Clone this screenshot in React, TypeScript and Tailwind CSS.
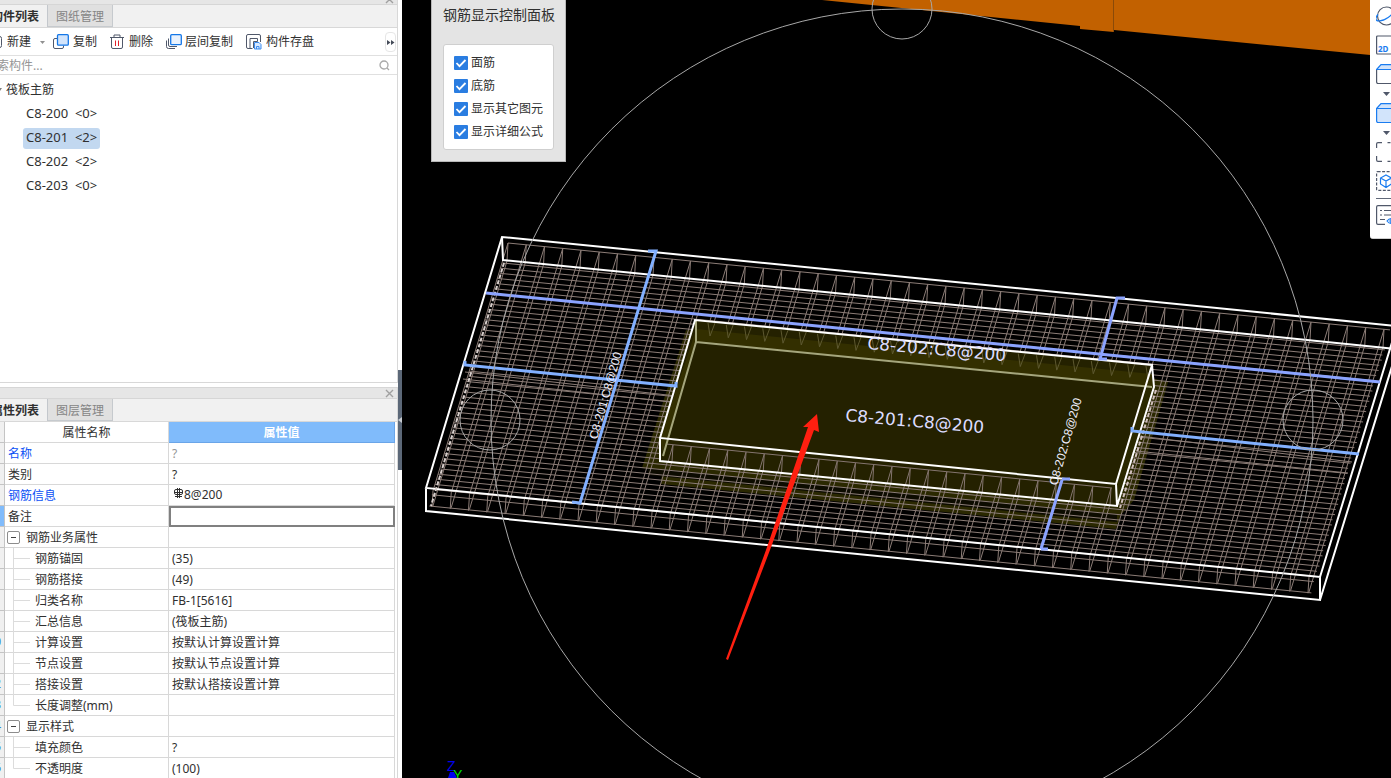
import React from 'react'

type PropertyRow = {
  name: string
  value?: string
  kind?: 'link' | 'group' | 'child' | 'last'
  muted?: boolean
  rebar?: boolean
  active?: boolean
}

const components = [
  { name: 'C8-200', count: 0 },
  { name: 'C8-201', count: 2, selected: true },
  { name: 'C8-202', count: 2 },
  { name: 'C8-203', count: 0 },
]

const properties: PropertyRow[] = [
  { name: '名称', value: '?', kind: 'link', muted: true },
  { name: '类别', value: '?' },
  { name: '钢筋信息', value: '8@200', kind: 'link', rebar: true },
  { name: '备注', active: true },
  { name: '钢筋业务属性', kind: 'group' },
  { name: '钢筋锚固', value: '(35)', kind: 'child' },
  { name: '钢筋搭接', value: '(49)', kind: 'child' },
  { name: '归类名称', value: 'FB-1[5616]', kind: 'child' },
  { name: '汇总信息', value: '(筏板主筋)', kind: 'child' },
  { name: '计算设置', value: '按默认计算设置计算', kind: 'child' },
  { name: '节点设置', value: '按默认节点设置计算', kind: 'child' },
  { name: '搭接设置', value: '按默认搭接设置计算', kind: 'child' },
  { name: '长度调整(mm)', kind: 'last' },
  { name: '显示样式', kind: 'group' },
  { name: '填充颜色', value: '?', kind: 'child' },
  { name: '不透明度', value: '(100)', kind: 'last' },
]

const displayOptions = ['面筋', '底筋', '显示其它图元', '显示详细公式']

// Rebar mesh of the slab, in the same coordinates as the viewport's viewBox
const SLOPE = 0.0985
const LEAN = -0.3025

const range = (n: number) => Array.from({ length: n }, (_, i) => i)

const crossBars = range(49)
  .map((k) => {
    const x = 508 + k * 18.25
    const y = 243 + k * 18.25 * SLOPE
    return (
      `M${x} ${y}l${248 * LEAN} 248` +
      `M${x - 1} ${y + 18}l${245 * LEAN} 245` +
      `M${x} ${y}l-1 18` +
      `M${x + 248 * LEAN} ${y + 248}l-1 16`
    )
  })
  .join('')

const longBars = [0, ...range(46).map((i) => 20 + i * 5.15), 263]
  .map((dy, i) => {
    const x = 508 + (dy - (i % 2) * 3) * LEAN
    return `M${x} ${243 + dy}l882 ${882 * SLOPE}`
  })
  .join('')

const pitTeeth = (x0: number, y0: number, n: number) =>
  range(n)
    .map((k) => {
      const x = x0 + k * 18.25
      const y = y0 + k * 18.25 * SLOPE
      return `M${x} ${y}l-1 17M${x} ${y}l-5 17`
    })
    .join('')

const backTeeth = range(25)
  .map((k) => {
    const x = 710 + k * 18.25
    const y = 336 + k * 18.25 * SLOPE
    return `M${x} ${y}l5 -13M${x} ${y}l-2 -13`
  })
  .join('')

function CloseMark() {
  return (
    <svg width="9" height="9" viewBox="0 0 9 9" stroke="#a0a0a0" strokeWidth="1.4">
      <path d="M1 1l7 7M8 1l-7 7" />
    </svg>
  )
}

function PaneTitle() {
  return (
    <div className="h-3 shrink-0 flex items-center justify-end pr-[3px] bg-[#e6e6e6] border-y border-[#d6d6d6]">
      <button type="button" aria-label="关闭">
        <CloseMark />
      </button>
    </div>
  )
}

function Tabs({ active, other }: { active: string; other: string }) {
  return (
    <div className="h-[23px] shrink-0 flex bg-[#f1f1f1] border-b border-[#d8d8d8]" role="tablist">
      <button type="button" role="tab" aria-selected="true" className="w-12 flex justify-end items-center overflow-hidden whitespace-nowrap pt-0.5 pr-2 font-bold text-[#303030] border-r border-[#c3c7cc]">
        {active}
      </button>
      <button type="button" role="tab" aria-selected="false" className="pt-0.5 px-2 text-[#858585] bg-[#e0e0e0] border-r border-b border-[#c6cace]">
        {other}
      </button>
    </div>
  )
}

function CopyIcon() {
  return (
    <svg width="16" height="16" viewBox="0 0 16 16" fill="none">
      <path d="M4 4.5H2a1.500 1.500 0 0 0-1.500 1.500v7A1.500 1.500 0 0 0 2 14.500h7a1.500 1.500 0 0 0 1.500-1.500v-1.500" stroke="#50586a" />
      <rect x="4.500" y="0.700" width="10.800" height="10.500" rx="1" fill="#d2e4fb" stroke="#1477e8" strokeWidth="1.300" />
    </svg>
  )
}

function TrashIcon() {
  return (
    <svg width="14" height="16" viewBox="0 0 14 16" fill="none" stroke="#50586a">
      <path d="M0 3.500h14M4 3.500v-2.500h6v2.500M1.500 3.500V13a1.500 1.500 0 0 0 1.500 1.500h8A1.500 1.500 0 0 0 12.500 13V3.500" />
      <path d="M5.500 6.500v5.500M8.500 6.500v5.500" stroke="#e0202c" />
    </svg>
  )
}

function FloorCopyIcon() {
  return (
    <svg width="16" height="16" viewBox="0 0 16 16" fill="none">
      <path d="M.5 6.500v6a2 2 0 0 0 2 2H9M2.500 4.500v6.500a1.500 1.500 0 0 0 1.500 1.500h7" stroke="#50586a" />
      <rect x="4.700" y="0.700" width="10.600" height="10" rx="1" fill="#e9f2fd" stroke="#1477e8" strokeWidth="1.300" />
    </svg>
  )
}

function SaveIcon() {
  return (
    <svg width="16" height="16" viewBox="0 0 16 16" fill="none" stroke="#50586a">
      <path d="M6.500 14.500H4V4.500h7.500V7.500H7.500V14M4 14.500H2A1.500 1.500 0 0 1 .5 13V2A1.500 1.500 0 0 1 2 .5h11A1.500 1.500 0 0 1 14.500 2v6" />
      <path d="M8.500 8.500h4.500l2 2v4.500H8.500zM10.500 15v-2.500h2.500V15" fill="#d6e8ff" stroke="#3c8df0" />
    </svg>
  )
}

function Toolbar() {
  return (
    <div className="h-7 shrink-0 flex items-center pt-px text-[#303030] border-b border-[#e0e0e0] overflow-hidden whitespace-nowrap">
      <button type="button" className="flex items-center gap-[5px]">
        <svg width="2" height="14" viewBox="0 0 2 14" fill="none" stroke="#50586a">
          <path d="M0 1.500q1.500 0 1.500 2v7q0 2-1.500 2" />
        </svg>
        新建
      </button>
      <button type="button" aria-label="新建选项" className="w-[22px] flex justify-center">
        <svg width="5" height="3" viewBox="0 0 5 3" fill="#909090">
          <path d="M0 0h5L2.500 3z" />
        </svg>
      </button>
      <button type="button" className="flex items-center gap-1">
        <CopyIcon />
        复制
      </button>
      <button type="button" className="ml-[13px] flex items-center gap-[5px]">
        <TrashIcon />
        删除
      </button>
      <button type="button" className="ml-[13px] flex items-center gap-[3px]">
        <FloorCopyIcon />
        层间复制
      </button>
      <button type="button" className="ml-[13px] flex items-center gap-1">
        <SaveIcon />
        构件存盘
      </button>
      <button type="button" aria-label="更多" className="ml-auto mr-px w-[11px] h-5 flex items-center justify-center rounded border border-[#e6e6e6]">
        <svg className="shrink-0" width="8" height="5" viewBox="0 0 8 5" fill="#444b58">
          <path d="M0 0l3.500 2.500L0 5zM4 0l3.500 2.500L4 5z" />
        </svg>
      </button>
    </div>
  )
}

function ComponentPane() {
  return (
    <section className="flex-1 min-h-0 flex flex-col overflow-hidden border-r border-b border-[#d8d8d8]">
      <div className="-mt-[7px]">
        <PaneTitle />
      </div>
      <Tabs active="构件列表" other="图纸管理" />
      <Toolbar />
      <div className="h-[19px] shrink-0 flex items-center overflow-hidden border-b border-[#e0e0e0] pr-[7px]">
        <input aria-label="搜索构件" placeholder="搜索构件..." className="-ml-[15px] pt-px flex-1 min-w-0 outline-none placeholder:text-[#969696]" />
        <svg width="11" height="11" viewBox="0 0 11 11" fill="none" stroke="#a8a8a8" strokeWidth="1.300">
          <circle cx="5" cy="5" r="4" />
          <path d="M8 8l2 2" />
        </svg>
      </div>
      <div className="pt-[3px] text-[#303030]">
        <button type="button" className="h-6 flex items-center gap-1">
          <svg width="2" height="4" viewBox="0 0 2 4" fill="#808080">
            <path d="M0 0h2L0 3z" />
          </svg>
          筏板主筋
        </button>
        <ul className="pl-[23px] text-[13px]">
          {components.map((c) => (
            <li key={c.name} className="h-6 flex items-center">
              <button
                type="button"
                className={`h-[21px] w-[77px] px-[3px] rounded-[3px] text-left whitespace-pre ${c.selected ? 'bg-[#c2d8f0]' : ''}`}
              >
                {c.name}{'  '}&lt;{c.count}&gt;
              </button>
            </li>
          ))}
        </ul>
      </div>
    </section>
  )
}

function NameCell({ row }: { row: PropertyRow }) {
  if (row.kind === 'group') {
    return (
      <div className="flex items-center gap-[6px] pl-[2px]">
        <button type="button" aria-label="折叠" className="w-[13px] h-[13px] flex items-center justify-center rounded-[2px] border border-[#8c8c8c]">
          <span className="w-[5px] h-px bg-[#404040]" />
        </button>
        <span className="pt-0.5">{row.name}</span>
      </div>
    )
  }
  if (row.kind === 'child' || row.kind === 'last') {
    return (
      <div className="h-5 flex items-center gap-[5px] pl-2">
        <svg width="17" height="21" viewBox="0 0 17 21" stroke="#dcdcdc" fill="none">
          <path d={row.kind === 'last' ? 'M.5 0v10.500H17' : 'M.5 0v21M0 10.500h17'} />
        </svg>
        <span className="pt-0.5">{row.name}</span>
      </div>
    )
  }
  return <div className={`pt-0.5 pl-[3px] ${row.kind === 'link' ? 'text-[#0a50f5]' : ''}`}>{row.name}</div>
}

function PropertyPane() {
  return (
    <section className="h-[391px] shrink-0 overflow-hidden border-r border-[#d8d8d8]">
      <PaneTitle />
      <Tabs active="属性列表" other="图层管理" />
      <div className="pr-[2px]">
        <table className="w-full table-fixed border-separate border-spacing-0 text-[#303030]">
          <colgroup>
            <col className="w-[5px]" />
            <col className="w-[164px]" />
            <col />
          </colgroup>
          <thead>
            <tr className="h-[21px]">
              <td className="p-0 border-r border-b border-[#c4c4c4] bg-[#f0f0f0]" />
              <th className="p-0 pt-0.5 font-normal border-r border-b border-[#d8d8d8]">属性名称</th>
              <th className="p-0 pt-0.5 font-bold text-white bg-[#80bbfb] border-r border-b border-[#6aa5e8]">属性值</th>
            </tr>
          </thead>
          <tbody>
            {properties.map((row, i) => (
              <tr key={row.name} className="h-[21px]">
                <td className={`p-0 border-r border-b border-[#c4c4c4] ${row.active ? 'bg-[#80bbfb]' : 'bg-[#f0f0f0]'}`}>
                  <div className="h-5 w-1 flex items-center justify-end overflow-hidden pr-[3px] text-[#2f7fd0]">
                    {i > 8 ? i + 1 : ''}
                  </div>
                </td>
                <td className="p-0 border-r border-b border-[#d8d8d8]">
                  <NameCell row={row} />
                </td>
                <td className={row.active ? 'p-0 border-2 border-[#808080]' : 'py-0 pr-0 pl-[3px] border-r border-b border-[#d8d8d8]'}>
                  <div className={`flex items-center whitespace-nowrap ${row.rebar ? '' : 'pt-0.5'} ${row.muted ? 'text-[#959595]' : ''}`}>
                    {row.rebar && (
                      <svg className="ml-[2px] mb-1" width="10" height="10" viewBox="0 0 10 10" fill="none" stroke="#303030">
                        <path d="M3.500 0v10M5.500 0v10M1 8.500h7M0 4.500h9M2 1.500h5q1.500 0 1.500 1.500v2q0 1.500-1.500 1.500H2Q.5 6.500 .5 5V3Q.5 1.500 2 1.500" />
                      </svg>
                    )}
                    {row.value}
                  </div>
                </td>
              </tr>
            ))}
          </tbody>
        </table>
      </div>
    </section>
  )
}

function Scene() {
  return (
    <svg
      className="absolute inset-0 w-full h-full"
      viewBox="402 0 989 778"
      preserveAspectRatio="xMinYMin slice"
      fill="none"
      role="img"
      aria-label="筏板钢筋三维"
    >
      <defs>
        <clipPath id="around-pit">
          <path clipRule="evenodd" d="M402 0H1391V778H402zM695 320L1152 365L1154 387L1117 506L660 461L660 438z" />
        </clipPath>
      </defs>

      <path d="M822 0L1080 26V29L1114 32V30L1391 57V0z" fill="#c26100" />
      <path d="M1113.500 0V32" stroke="#8a4a08" />

      {/* Pit and its slope */}
      <path d="M686 330L642 468L662 471L661 484L1116 529L1120 516L1134 500L1168 382L1152 378z" fill="#2a2800" />
      <path d="M648 468L1117 514L1117 522L648 475z" fill="#0c0b00" />
      <path d="M695 320L1152 365L1116 484L660 438z" fill="#242100" />
      <path d="M660 438L1116 484V506L660 461z" fill="#242100" />
      <path d="M696 329L1152 374V387L696 342zM696 330V342L664 458L660 438z" fill="#332f00" />

      {/* Rebar mesh */}
      <g clipPath="url(#around-pit)" stroke="#8c7d77">
        <path d={crossBars} />
        <path d={longBars} />
        <path d="M465 372L676 396M463 379L670 402M1139 436L1352 462M1136 451L1348 473" />
        <path d="M1156 390L1120 508" stroke="#d0bfbc" strokeWidth="2" strokeDasharray="4 2" />
      </g>
      <path d={pitTeeth(673, 445, 25)} stroke="#84756f" />
      <path d="M666 444L1112 488" stroke="#84756f" />
      <path d={backTeeth} stroke="#5d5830" />

      {/* Slab and pit outlines */}
      <g stroke="#fff" strokeWidth="2">
        <path d="M426 488L502 237L1397 326L1320 577zM426 488V511L1320 600V577M1320 600L1397 350" />
        <path d="M502 237L503 260L1397 349" />
        <path d="M504 263L431 506" stroke="#d8cfcc" strokeDasharray="4 2" />
        <path d="M696 321V342L663 456M696 342L1152 387" stroke="#a5a67d" />
        <path d="M660 438L695 320L1152 365L1116 484zM660 438V461L1117 506L1116 484M1152 365L1154 387L1117 506" />
      </g>

      {/* Distribution ranges */}
      <g strokeWidth="3">
        <path d="M486 293L1380 382M1125 298H1117L1100 359H1107M1062 480L1041 549M1070 479H1062M1041 549H1048" stroke="#8ba3ff" />
        <path d="M648 251H656L580 503L572 502M465 361V365L676 386V382M1132 427V431L1359 454" stroke="#82b0ff" />
      </g>

      {/* Orbit gizmo */}
      <g stroke="#a8a8a8">
        <circle cx="902" cy="420" r="411" />
        <circle cx="902" cy="9" r="30" />
        <circle cx="490" cy="420" r="30" />
        <circle cx="1313" cy="420" r="30" />
      </g>

      <g className="font-['DejaVu_Sans',sans-serif] text-[17px]" fill="#dcdcff">
        <text x="867" y="349" transform="rotate(5 867 349)">C8-202:C8@200</text>
        <text x="845" y="421" transform="rotate(5 845 421)">C8-201:C8@200</text>
      </g>
      <g className="font-['Liberation_Sans',sans-serif] text-xs" fill="#f0f0ff">
        <text x="597" y="440" transform="rotate(-74 597 440)">C8-201:C8@200</text>
        <text x="1057" y="486" transform="rotate(-74 1057 486)">C8-202:C8@200</text>
      </g>

      <path d="M817 414L803 427L808 427L766 550L726 659L728 660L770 550L814 430L819 432z" fill="#ff1f10" />

      <g className="font-['Liberation_Sans',sans-serif] text-sm">
        <text x="447" y="771" fill="#0000f0">Z</text>
        <path d="M450 772h4l3 6h-9z" fill="#0000f0" />
        <text x="453" y="780" fill="#00e000">Y</text>
      </g>
    </svg>
  )
}

function DisplayPanel() {
  return (
    <div className="absolute left-[29px] top-0 pl-[11px] pr-[10px] pb-[11px] bg-[#e4e4e4] border border-t-0 border-[#b8b8b8] text-[#303030]">
      <h2 className="h-11 pt-[5px] text-sm">钢筋显示控制面板</h2>
      <div className="w-[111px] h-[106px] pt-[6px] pl-[10px] bg-white rounded-[3px] border border-[#cfcfcf]">
        {displayOptions.map((label) => (
          <label key={label} className="h-[23px] flex items-center gap-[3px] whitespace-nowrap">
            <span className="grid shrink-0">
              <input type="checkbox" defaultChecked className="col-start-1 row-start-1 appearance-none w-[14px] h-[14px] rounded-[1px] bg-[#2a7de1]" />
              <svg className="col-start-1 row-start-1 pointer-events-none" width="14" height="14" viewBox="0 0 14 14" fill="none" stroke="#fff" strokeWidth="1.800">
                <path d="M2.500 7l3 3.200L11.500 4" />
              </svg>
            </span>
            {label}
          </label>
        ))}
      </div>
    </div>
  )
}

function ToolIcon({ label, children }: { label: string; children: React.ReactNode }) {
  return (
    <button type="button" aria-label={label} className="shrink-0">
      <svg width="20" height="20" viewBox="0 0 20 20" fill="none" stroke="#50586a" strokeWidth="1.200">
        {children}
      </svg>
    </button>
  )
}

function DropArrow({ label }: { label: string }) {
  return (
    <button type="button" aria-label={label} className="w-[21px] h-[19px] flex items-center justify-center">
      <svg width="7" height="4" viewBox="0 0 7 4" fill="#50586a">
        <path d="M0 0h7L3.500 4z" />
      </svg>
    </button>
  )
}

function ViewToolbar() {
  return (
    <div className="absolute right-0 top-0 w-[21px] h-[239px] pl-[6px] pt-[6px] overflow-hidden flex flex-col items-start bg-white rounded-bl-[3px] border-b border-[#cfcfcf]">
      <ToolIcon label="动态观察">
        <circle cx="10.500" cy="10" r="9" />
        <path d="M2 8.500C-1 12 -1 15 3 15C9 15 16 9.500 19 4" stroke="#1a7cf0" />
      </ToolIcon>
      <div className="mt-[9px] grid">
        <ToolIcon label="二维">
          <rect x=".6" y="1" width="18.500" height="18" rx="1" />
          <text x="2" y="17" className="font-['Noto_Sans',sans-serif] text-[8px] font-bold" fill="#1a7cf0" stroke="none">2D</text>
        </ToolIcon>
      </div>
      <div className="mt-[9px] grid">
        <ToolIcon label="三维">
          <path d="M.6 5.500h15v14H2a1.400 1.400 0 0 1-1.400-1.400z" />
          <path d="M.6 5.500L5 .6h14.500l-4 4.900z" fill="#d2e4fb" stroke="#1a7cf0" />
        </ToolIcon>
      </div>
      <DropArrow label="三维选项" />
      <ToolIcon label="显示">
        <path d="M.6 5.500L5 .6h14.500v14l-4 4.900H2a1.400 1.400 0 0 1-1.400-1.400zM.6 5.500H16M5 .6" fill="#d2e4fb" stroke="#1a7cf0" />
      </ToolIcon>
      <DropArrow label="显示选项" />
      <ToolIcon label="全屏">
        <path d="M.6 6V2Q.6 .6 2 .6h4M.6 14v4q0 1.400 1.400 1.400h4M11.500 .6h3M11.500 19.400h3" />
      </ToolIcon>
      <div className="mt-[9px] grid">
        <ToolIcon label="局部三维">
          <rect x=".6" y=".6" width="18.800" height="18.800" rx="1" strokeDasharray="3 1.500" />
          <path d="M10 4l5.500 3v6L10 16.500 4.500 13V7zM4.500 7L10 10l5.500-3M10 10v6.500" stroke="#1a7cf0" />
        </ToolIcon>
      </div>
      <div className="mt-[7px] mb-[6px] w-5 h-px shrink-0 bg-[#606878]" />
      <ToolIcon label="显示设置">
        <path d="M9 19.400H2Q.6 19.400.6 18V2Q.6.6 2 .6h17M4 5.500h2M8 5.500h9M4 10h2M8 10h9M4 14.500h5" />
        <path d="M11 16q4-5 9 0q-5 5-9 0z" stroke="#1a7cf0" />
        <circle cx="15.500" cy="16" r="1.500" stroke="#1a7cf0" />
      </ToolIcon>
    </div>
  )
}

export default function App() {
  return (
    <div className="h-screen flex overflow-hidden bg-white font-['Noto_Sans','Noto_Sans_CJK_SC',sans-serif] text-xs">
      <aside className="w-[398px] shrink-0 flex flex-col gap-1">
        <ComponentPane />
        <PropertyPane />
      </aside>
      <div className="w-1 shrink-0 flex items-center pt-[62px]">
        <button type="button" aria-label="收起面板" className="w-1 h-[100px] flex items-center bg-[#5c6878]">
          <svg width="4" height="6" viewBox="0 0 4 6" fill="#c8ccd2">
            <path d="M4 0v6L0 3z" />
          </svg>
        </button>
      </div>
      <main className="relative flex-1 min-w-0 bg-black overflow-hidden">
        <Scene />
        <DisplayPanel />
        <ViewToolbar />
      </main>
    </div>
  )
}
